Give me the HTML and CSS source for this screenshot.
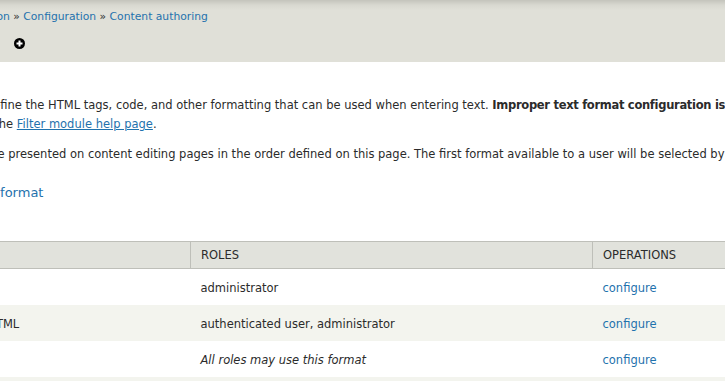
FILE: index.html
```html
<!DOCTYPE html>
<html lang="en">
<head>
    <meta charset="UTF-8">
    <title>Text formats</title>
    <link rel="stylesheet" href="styles.css">
</head>
<body>
    <div class="page">
        <div class="branding">
            <div class="breadcrumb">
                <a href="#">Home</a> » <a href="#">Administration</a> » <a href="#">Configuration</a> » <a href="#">Content authoring</a>
            </div>
            <div class="title-row">
                <a href="#" class="shortcut" title="Add to shortcuts">
                    <svg width="11" height="11" viewBox="0 0 11 11">
                        <circle cx="5.5" cy="5.5" r="5.5" fill="#000"/>
                        <rect x="4.5" y="2.5" width="2" height="6" fill="#fff"/>
                        <rect x="2.5" y="4.5" width="6" height="2" fill="#fff"/>
                    </svg>
                </a>
            </div>
        </div>

        <div class="content">
            <p>Text formats define the HTML tags, code, and other formatting that can be used when entering text. <strong>Improper text format configuration is a security risk.</strong>
                <span class="help-line">Learn more on the <a href="#" class="underline">Filter module help page</a>.</span></p>
            <p>Text formats are presented on content editing pages in the order defined on this page. The first format available to a user will be selected by default.</p>

            <ul class="action-links">
                <li><a href="#">Add text format</a></li>
            </ul>

            <table class="formats">
                <thead>
                    <tr>
                        <th class="col-name">Name</th>
                        <th class="col-roles">Roles</th>
                        <th>Operations</th>
                    </tr>
                </thead>
                <tbody>
                    <tr class="odd">
                        <td><span class="drag-handle"></span>Full HTML</td>
                        <td>administrator</td>
                        <td><a href="#">configure</a></td>
                    </tr>
                    <tr class="even">
                        <td><span class="drag-handle"></span>Filtered HTML</td>
                        <td>authenticated user, administrator</td>
                        <td><a href="#">configure</a></td>
                    </tr>
                    <tr class="odd">
                        <td><span class="drag-handle"></span>Plain text</td>
                        <td><em>All roles may use this format</em></td>
                        <td><a href="#">configure</a></td>
                    </tr>
                    <tr class="even">
                        <td>&nbsp;</td>
                        <td></td>
                        <td></td>
                    </tr>
                </tbody>
            </table>
        </div>
    </div>
</body>
</html>
```

FILE: styles.css
```css
:root {
    --header-bg: #e0e0d8;
    --table-head: #e1e2dc;
    --row-even: #f3f4ee;
    --border: #bebfb9;
    --link: #1f72ad;
    --text: #2b2b2b;
}

body {
    margin: 0;
    overflow: hidden;
    font-family: "DejaVu Sans", Verdana, sans-serif;
    font-size: 11.5px;
    color: var(--text);
    background: #fff;
}

a {
    color: var(--link);
    text-decoration: none;
}

.page {
    width: 1100px;
}

.branding {
    height: 62px;
    background: linear-gradient(to bottom, #c4c4bc 0, #d8d8d0 5px, var(--header-bg) 10px);
}

.breadcrumb {
    padding: 10px 0 0 0;
    margin-left: -114px;
    height: 20px;
    font-size: 10.75px;
    line-height: 14px;
}

.title-row {
    padding: 8px 0 0 14px;
}

.shortcut {
    display: inline-block;
}

.content {
    margin-left: -89px;
    width: 1000px;
    padding-top: 34px;
}

.content p {
    margin: 0 0 11px;
    line-height: 19px;
}

.content strong {
    letter-spacing: -0.3px;
}

.content .help-line {
    display: block;
    margin-left: -4px;
}

.content .underline {
    text-decoration: underline;
}

.action-links {
    list-style: none;
    margin: 21px 0 0;
    padding: 0 0 0 30px;
    font-size: 13px;
}

.formats {
    margin-top: 41px;
    width: 100%;
    border-collapse: collapse;
}

.formats th {
    background: var(--table-head);
    border-top: 1px solid var(--border);
    border-bottom: 1px solid var(--border);
    text-transform: uppercase;
    font-weight: normal;
    text-align: left;
    height: 26px;
    padding: 0 10px;
}

.formats th + th {
    border-left: 1px solid var(--border);
}

.formats .col-name {
    width: 259px;
}

.formats .col-roles {
    width: 381px;
}

.formats td {
    height: 35px;
    padding: 1px 10px 0;
}

.formats tr.even {
    background: var(--row-even);
}

.drag-handle {
    display: inline-block;
    width: 20px;
}
```
